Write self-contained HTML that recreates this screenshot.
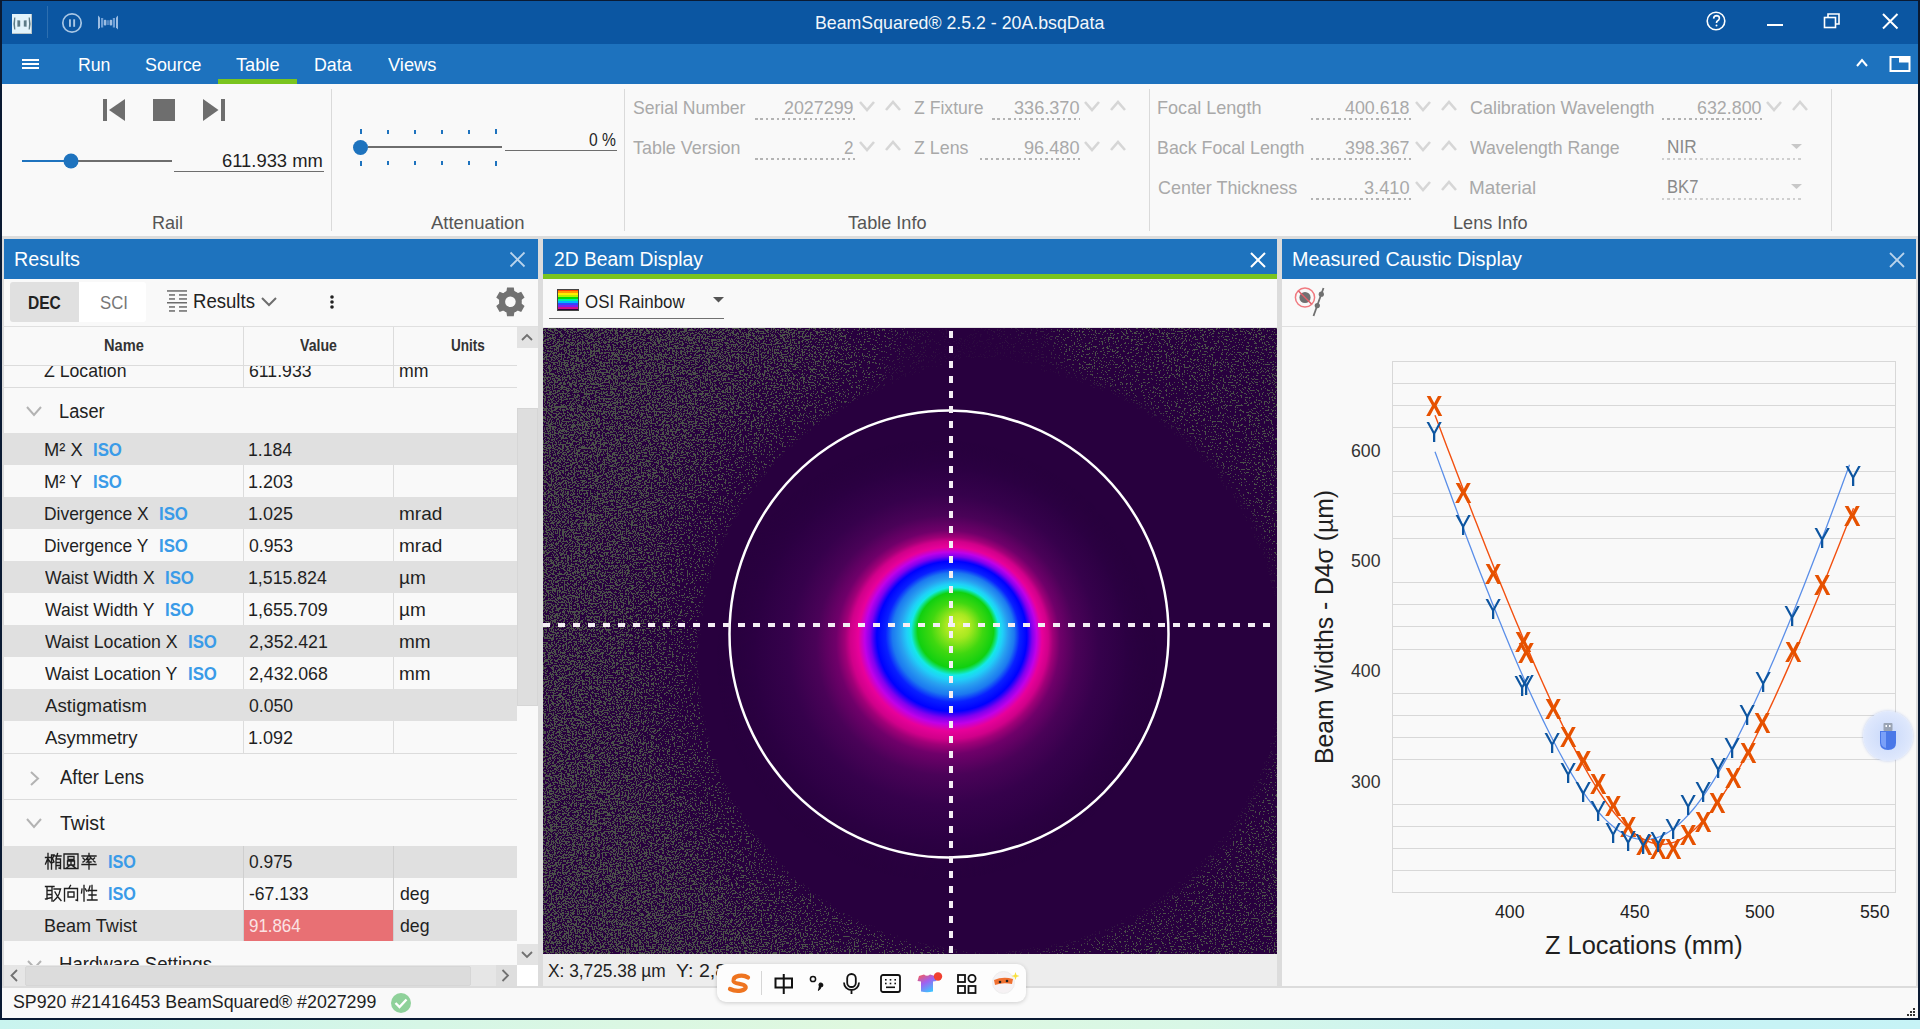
<!DOCTYPE html>
<html><head><meta charset="utf-8"><style>
html,body{margin:0;padding:0;width:1920px;height:1029px;overflow:hidden;background:#cdf4f0;font-family:"Liberation Sans",sans-serif;}
.t{position:absolute;white-space:pre;transform-origin:0 0;}
div{box-sizing:border-box;}
svg{position:absolute;overflow:visible;}
</style></head><body>
<div style="position:absolute;left:0px;top:0px;width:1920px;height:1020px;background:#0a1a33;"></div>
<div style="position:absolute;left:0px;top:1020px;width:1920px;height:9px;background:linear-gradient(90deg,#c9f4ef 0%,#d6f6e6 22%,#dff8df 45%,#d8f7e6 62%,#c9f3f3 78%,#c6f3f6 100%);"></div>
<div style="position:absolute;left:2px;top:1px;width:1916px;height:43px;background:#0b56a2;"></div>
<div style="position:absolute;left:2px;top:44px;width:1916px;height:40px;background:#1d72be;"></div>
<div style="position:absolute;left:2px;top:84px;width:1916px;height:152px;background:#f9f9f9;"></div>
<div style="position:absolute;left:2px;top:236px;width:1916px;height:752px;background:#dcdcdc;"></div>
<div style="position:absolute;left:2px;top:988px;width:1916px;height:30px;background:#f9f9f9;"></div>
<div style="position:absolute;left:218px;top:79px;width:79px;height:5px;background:#7ac41e;"></div>
<div style="position:absolute;left:331px;top:89px;width:1px;height:142px;background:#dadada;"></div>
<div style="position:absolute;left:624px;top:89px;width:1px;height:142px;background:#dadada;"></div>
<div style="position:absolute;left:1149px;top:89px;width:1px;height:142px;background:#dadada;"></div>
<div style="position:absolute;left:1831px;top:89px;width:1px;height:142px;background:#dadada;"></div>
<div style="position:absolute;left:4px;top:239px;width:534px;height:40px;background:#1e73be;"></div>
<div style="position:absolute;left:4px;top:279px;width:534px;height:48px;background:#f9f9f9;"></div>
<div style="position:absolute;left:4px;top:327px;width:534px;height:661px;background:#f9f9f9;"></div>
<div style="position:absolute;left:543px;top:239px;width:734px;height:35px;background:#1e73be;"></div>
<div style="position:absolute;left:543px;top:274px;width:734px;height:5px;background:#7ac41e;"></div>
<div style="position:absolute;left:543px;top:279px;width:734px;height:48px;background:#f9f9f9;"></div>
<div style="position:absolute;left:543px;top:328px;width:734px;height:626px;background:#28003e;"></div>
<div style="position:absolute;left:543px;top:954px;width:734px;height:32px;background:#ededed;"></div>
<div style="position:absolute;left:1282px;top:239px;width:634px;height:40px;background:#1e73be;"></div>
<div style="position:absolute;left:1282px;top:279px;width:634px;height:707px;background:#f9f9f9;"></div>
<div style="position:absolute;left:12px;top:14px;width:20px;height:20px;background:#e2f3fb;border-right:1px solid #b8c4c8;border-bottom:1px solid #b8c4c8"></div>
<svg style="left:12px;top:14px;" width="20" height="20" viewBox="0 0 20 20"><g fill="#5d7b86"><path d="M2.2,3.4 Q0.6,9.5 2.2,15.6 L3.4,15.6 Q2.6,9.5 3.4,3.4 Z"/><path d="M17.8,3.4 Q19.4,9.5 17.8,15.6 L16.6,15.6 Q17.4,9.5 16.6,3.4 Z"/><path d="M5.4,6.2 L8.2,6.6 L8.2,12.4 L5.4,12.8 Z"/><path d="M14.6,6.2 L11.8,6.6 L11.8,12.4 L14.6,12.8 Z"/></g></svg>
<div style="position:absolute;left:47px;top:6px;width:1px;height:32px;background:#2d6fb0;"></div>
<svg style="left:61px;top:12px;" width="22" height="22" viewBox="0 0 22 22"><circle cx="11" cy="11" r="9.2" fill="none" stroke="#a8c6e4" stroke-width="1.7"/><rect x="8" y="7.3" width="1.9" height="7.5" fill="#a8c6e4"/><rect x="12.2" y="7.3" width="1.9" height="7.5" fill="#a8c6e4"/></svg>
<svg style="left:97px;top:15px;" width="22" height="16" viewBox="0 0 22 16"><g fill="#9dbde2"><path d="M1,0.5 L3,2.5 V12.5 L1,14.5 Z"/><path d="M21,0.5 L19,2.5 V12.5 L21,14.5 Z"/><rect x="4" y="3" width="2.2" height="9.5" fill="#6f9fd6"/><rect x="15.8" y="3" width="2.2" height="9.5" fill="#6f9fd6"/><rect x="6.8" y="4.8" width="2.6" height="5.6" rx="1"/><rect x="12.6" y="4.8" width="2.6" height="5.6" rx="1"/><rect x="10.3" y="5.2" width="1.4" height="4.8" fill="#6f9fd6"/></g></svg>
<svg style="left:1705px;top:10px;" width="23" height="23" viewBox="0 0 23 23"><circle cx="11" cy="11" r="8.8" fill="none" stroke="#ffffff" stroke-width="1.6"/><path d="M8.6,8.6 Q8.8,5.6 11.6,5.6 Q14.5,5.8 14.4,8.3 Q14.3,10 12.4,11 Q11.5,11.6 11.5,13" fill="none" stroke="#fff" stroke-width="1.6"/><circle cx="11.5" cy="15.6" r="1" fill="#fff"/></svg>
<div style="position:absolute;left:1767px;top:24px;width:16px;height:2px;background:#ffffff;"></div>
<svg style="left:1823px;top:12px;" width="20" height="18" viewBox="0 0 20 18"><rect x="1.5" y="5.5" width="11" height="10" fill="none" stroke="#fff" stroke-width="1.6"/><path d="M5,5.5 V2 H16 V12 H12.5" fill="none" stroke="#fff" stroke-width="1.6"/></svg>
<svg style="left:1882px;top:13px;" width="17" height="17" viewBox="0 0 17 17"><path d="M1,1 L15.5,15.5 M15.5,1 L1,15.5" stroke="#fff" stroke-width="2"/></svg>
<div style="position:absolute;left:22px;top:59px;width:17px;height:2px;background:#ffffff;"></div>
<div style="position:absolute;left:22px;top:63px;width:17px;height:2px;background:#ffffff;"></div>
<div style="position:absolute;left:22px;top:67px;width:17px;height:2px;background:#ffffff;"></div>
<svg style="left:1855px;top:58px;" width="14" height="10" viewBox="0 0 14 10"><polyline points="2,8 7.0,2 12,8" fill="none" stroke="#ffffff" stroke-width="2"/></svg>
<svg style="left:1889px;top:55px;" width="23" height="18" viewBox="0 0 23 18"><rect x="1.5" y="2" width="19" height="14" fill="none" stroke="#fff" stroke-width="2"/><rect x="10" y="2" width="10.5" height="5.5" fill="#fff"/></svg>
<div style="position:absolute;left:103px;top:99px;width:4px;height:22px;background:#6e6e6e;"></div>
<svg style="left:109px;top:99px;" width="17" height="22" viewBox="0 0 17 22"><polygon points="0,11 16,0 16,22" fill="#6e6e6e"/></svg>
<div style="position:absolute;left:153px;top:99px;width:22px;height:22px;background:#6e6e6e;"></div>
<svg style="left:203px;top:99px;" width="16" height="22" viewBox="0 0 16 22"><polygon points="0,0 15.5,11 0,22" fill="#6e6e6e"/></svg>
<div style="position:absolute;left:221px;top:99px;width:4px;height:22px;background:#6e6e6e;"></div>
<div style="position:absolute;left:22px;top:160px;width:50px;height:2px;background:#1e73be;"></div>
<div style="position:absolute;left:72px;top:160px;width:100px;height:2px;background:#6e6e6e;"></div>
<svg style="left:63px;top:153px;" width="16" height="16" viewBox="0 0 16 16"><circle cx="8" cy="8" r="7.5" fill="#1e73be"/></svg>
<div style="position:absolute;left:174px;top:171px;width:150px;height:1px;background:#6e6e6e;"></div>
<div style="position:absolute;left:368px;top:146px;width:134px;height:2px;background:#6e6e6e;"></div>
<svg style="left:352px;top:139px;" width="17" height="17" viewBox="0 0 17 17"><circle cx="8.5" cy="8.5" r="7.5" fill="#1e73be"/></svg>
<div style="position:absolute;left:360px;top:129px;width:2px;height:5px;background:#1e73be;"></div>
<div style="position:absolute;left:360px;top:161px;width:2px;height:5px;background:#1e73be;"></div>
<div style="position:absolute;left:387px;top:130px;width:2px;height:4px;background:#1e73be;"></div>
<div style="position:absolute;left:387px;top:161px;width:2px;height:4px;background:#1e73be;"></div>
<div style="position:absolute;left:414px;top:130px;width:2px;height:4px;background:#1e73be;"></div>
<div style="position:absolute;left:414px;top:161px;width:2px;height:4px;background:#1e73be;"></div>
<div style="position:absolute;left:441px;top:130px;width:2px;height:4px;background:#1e73be;"></div>
<div style="position:absolute;left:441px;top:161px;width:2px;height:4px;background:#1e73be;"></div>
<div style="position:absolute;left:468px;top:130px;width:2px;height:4px;background:#1e73be;"></div>
<div style="position:absolute;left:468px;top:161px;width:2px;height:4px;background:#1e73be;"></div>
<div style="position:absolute;left:495px;top:129px;width:2px;height:5px;background:#1e73be;"></div>
<div style="position:absolute;left:495px;top:161px;width:2px;height:5px;background:#1e73be;"></div>
<div style="position:absolute;left:505px;top:150px;width:112px;height:1px;background:#6e6e6e;"></div>
<div style="position:absolute;left:755px;top:118px;width:100px;height:2px;background:repeating-linear-gradient(90deg,#b4b4b4 0 2.5px,transparent 2.5px 5.45px);"></div>
<div style="position:absolute;left:755px;top:158px;width:100px;height:2px;background:repeating-linear-gradient(90deg,#b4b4b4 0 2.5px,transparent 2.5px 5.45px);"></div>
<svg style="left:858px;top:100px;" width="18" height="12" viewBox="0 0 18 12"><polyline points="2,2 9.0,10 16,2" fill="none" stroke="#d6d6d6" stroke-width="2.6"/></svg>
<svg style="left:884px;top:100px;" width="18" height="12" viewBox="0 0 18 12"><polyline points="2,10 9.0,2 16,10" fill="none" stroke="#d6d6d6" stroke-width="2.6"/></svg>
<svg style="left:858px;top:140px;" width="18" height="12" viewBox="0 0 18 12"><polyline points="2,2 9.0,10 16,2" fill="none" stroke="#d6d6d6" stroke-width="2.6"/></svg>
<svg style="left:884px;top:140px;" width="18" height="12" viewBox="0 0 18 12"><polyline points="2,10 9.0,2 16,10" fill="none" stroke="#d6d6d6" stroke-width="2.6"/></svg>
<div style="position:absolute;left:992px;top:118px;width:88px;height:2px;background:repeating-linear-gradient(90deg,#b4b4b4 0 2.5px,transparent 2.5px 5.45px);"></div>
<div style="position:absolute;left:980px;top:158px;width:100px;height:2px;background:repeating-linear-gradient(90deg,#b4b4b4 0 2.5px,transparent 2.5px 5.45px);"></div>
<svg style="left:1083px;top:100px;" width="18" height="12" viewBox="0 0 18 12"><polyline points="2,2 9.0,10 16,2" fill="none" stroke="#d6d6d6" stroke-width="2.6"/></svg>
<svg style="left:1109px;top:100px;" width="18" height="12" viewBox="0 0 18 12"><polyline points="2,10 9.0,2 16,10" fill="none" stroke="#d6d6d6" stroke-width="2.6"/></svg>
<svg style="left:1083px;top:140px;" width="18" height="12" viewBox="0 0 18 12"><polyline points="2,2 9.0,10 16,2" fill="none" stroke="#d6d6d6" stroke-width="2.6"/></svg>
<svg style="left:1109px;top:140px;" width="18" height="12" viewBox="0 0 18 12"><polyline points="2,10 9.0,2 16,10" fill="none" stroke="#d6d6d6" stroke-width="2.6"/></svg>
<div style="position:absolute;left:1311px;top:118px;width:100px;height:2px;background:repeating-linear-gradient(90deg,#b4b4b4 0 2.5px,transparent 2.5px 5.45px);"></div>
<svg style="left:1414px;top:100px;" width="18" height="12" viewBox="0 0 18 12"><polyline points="2,2 9.0,10 16,2" fill="none" stroke="#d6d6d6" stroke-width="2.6"/></svg>
<svg style="left:1440px;top:100px;" width="18" height="12" viewBox="0 0 18 12"><polyline points="2,10 9.0,2 16,10" fill="none" stroke="#d6d6d6" stroke-width="2.6"/></svg>
<div style="position:absolute;left:1311px;top:158px;width:100px;height:2px;background:repeating-linear-gradient(90deg,#b4b4b4 0 2.5px,transparent 2.5px 5.45px);"></div>
<svg style="left:1414px;top:140px;" width="18" height="12" viewBox="0 0 18 12"><polyline points="2,2 9.0,10 16,2" fill="none" stroke="#d6d6d6" stroke-width="2.6"/></svg>
<svg style="left:1440px;top:140px;" width="18" height="12" viewBox="0 0 18 12"><polyline points="2,10 9.0,2 16,10" fill="none" stroke="#d6d6d6" stroke-width="2.6"/></svg>
<div style="position:absolute;left:1311px;top:198px;width:100px;height:2px;background:repeating-linear-gradient(90deg,#b4b4b4 0 2.5px,transparent 2.5px 5.45px);"></div>
<svg style="left:1414px;top:180px;" width="18" height="12" viewBox="0 0 18 12"><polyline points="2,2 9.0,10 16,2" fill="none" stroke="#d6d6d6" stroke-width="2.6"/></svg>
<svg style="left:1440px;top:180px;" width="18" height="12" viewBox="0 0 18 12"><polyline points="2,10 9.0,2 16,10" fill="none" stroke="#d6d6d6" stroke-width="2.6"/></svg>
<div style="position:absolute;left:1662px;top:118px;width:100px;height:2px;background:repeating-linear-gradient(90deg,#b4b4b4 0 2.5px,transparent 2.5px 5.45px);"></div>
<svg style="left:1765px;top:100px;" width="18" height="12" viewBox="0 0 18 12"><polyline points="2,2 9.0,10 16,2" fill="none" stroke="#d6d6d6" stroke-width="2.6"/></svg>
<svg style="left:1791px;top:100px;" width="18" height="12" viewBox="0 0 18 12"><polyline points="2,10 9.0,2 16,10" fill="none" stroke="#d6d6d6" stroke-width="2.6"/></svg>
<div style="position:absolute;left:1662px;top:158px;width:140px;height:2px;background:repeating-linear-gradient(90deg,#cfcfcf 0 2.5px,transparent 2.5px 5.45px);"></div>
<div style="position:absolute;left:1662px;top:198px;width:140px;height:2px;background:repeating-linear-gradient(90deg,#cfcfcf 0 2.5px,transparent 2.5px 5.45px);"></div>
<svg style="left:1791px;top:144px;" width="12" height="6" viewBox="0 0 12 6"><polygon points="0,0 11,0 5.5,5" fill="#c8c8c8"/></svg>
<svg style="left:1791px;top:184px;" width="12" height="6" viewBox="0 0 12 6"><polygon points="0,0 11,0 5.5,5" fill="#c8c8c8"/></svg>
<svg style="left:509px;top:251px;" width="17" height="17" viewBox="0 0 17 17"><path d="M1.5,1.5 L15.5,15.5 M15.5,1.5 L1.5,15.5" stroke="#b9d3ec" stroke-width="1.8"/></svg>
<div style="position:absolute;left:10px;top:282px;width:69px;height:40px;background:#e0e0e0;border-radius:3px 0 0 3px"></div>
<div style="position:absolute;left:79px;top:282px;width:67px;height:40px;background:#ffffff;border-radius:0 3px 3px 0"></div>
<svg style="left:167px;top:290px;" width="21" height="22" viewBox="0 0 21 22"><rect x="0" y="0.2" width="20" height="1.5" fill="#6b6b6b"/><rect x="2" y="4.2" width="6" height="1.5" fill="#6b6b6b"/><rect x="12" y="4.2" width="8" height="1.5" fill="#6b6b6b"/><rect x="2" y="8.2" width="6" height="1.5" fill="#6b6b6b"/><rect x="12" y="8.2" width="8" height="1.5" fill="#6b6b6b"/><rect x="0" y="12" width="20" height="1.5" fill="#6b6b6b"/><rect x="2" y="16.2" width="6" height="1.5" fill="#6b6b6b"/><rect x="12" y="16.2" width="8" height="1.5" fill="#6b6b6b"/><rect x="2" y="20.2" width="6" height="1.5" fill="#6b6b6b"/><rect x="12" y="20.2" width="8" height="1.5" fill="#6b6b6b"/></svg>
<svg style="left:260px;top:296px;" width="18" height="11" viewBox="0 0 18 11"><polyline points="2,2 9.0,9 16,2" fill="none" stroke="#6e6e6e" stroke-width="2"/></svg>
<svg style="left:329px;top:294px;" width="6" height="6" viewBox="0 0 6 6"><circle cx="3" cy="3" r="1.8" fill="#222"/></svg>
<svg style="left:329px;top:299.2px;" width="6" height="6" viewBox="0 0 6 6"><circle cx="3" cy="3" r="1.8" fill="#222"/></svg>
<svg style="left:329px;top:304.4px;" width="6" height="6" viewBox="0 0 6 6"><circle cx="3" cy="3" r="1.8" fill="#222"/></svg>
<svg style="left:494px;top:286px;" width="32" height="32" viewBox="0 0 32 32"><polygon points="12.45,5.32 13.03,1.39 19.77,1.39 20.35,5.32 23.50,7.14 27.19,5.67 30.57,11.52 27.45,13.98 27.45,17.62 30.57,20.08 27.19,25.93 23.50,24.46 20.35,26.28 19.77,30.21 13.03,30.21 12.45,26.28 9.30,24.46 5.61,25.93 2.23,20.08 5.35,17.62 5.35,13.98 2.23,11.52 5.61,5.67 9.30,7.14" fill="#727272"/><circle cx="16.4" cy="15.8" r="11.2" fill="#727272"/><circle cx="16.4" cy="15.8" r="5.3" fill="#f9f9f9"/></svg>
<div style="position:absolute;left:4px;top:326px;width:534px;height:1px;background:#e0e0e0;"></div>
<div style="position:absolute;left:243px;top:327px;width:1px;height:60px;background:#dcdcdc;"></div>
<div style="position:absolute;left:243px;top:433px;width:1px;height:320px;background:#dcdcdc;"></div>
<div style="position:absolute;left:393px;top:327px;width:1px;height:60px;background:#dcdcdc;"></div>
<div style="position:absolute;left:393px;top:433px;width:1px;height:320px;background:#dcdcdc;"></div>
<div style="position:absolute;left:4px;top:365px;width:513px;height:1px;background:#dcdcdc;"></div>
<div style="position:absolute;left:4px;top:387px;width:513px;height:1px;background:#dcdcdc;"></div>
<div style="position:absolute;left:4px;top:366px;width:513px;height:21px;overflow:hidden"><div class="t" style="left:40px;top:-6px;font-size:19px;line-height:21px;color:#1f1f1f;transform:scaleX(0.93)">Z Location</div><div class="t" style="left:245px;top:-6px;font-size:19px;line-height:21px;color:#1f1f1f;transform:scaleX(0.93)">611.933</div><div class="t" style="left:395px;top:-6px;font-size:19px;line-height:21px;color:#1f1f1f;transform:scaleX(0.93)">mm</div></div>
<svg style="left:25px;top:405px;" width="18" height="12" viewBox="0 0 18 12"><polyline points="2,2 9.0,10 16,2" fill="none" stroke="#b3b3b3" stroke-width="2"/></svg>
<div style="position:absolute;left:4px;top:433px;width:513px;height:32px;background:#e0e0e0;"></div>
<div style="position:absolute;left:4px;top:497px;width:513px;height:32px;background:#e0e0e0;"></div>
<div style="position:absolute;left:4px;top:561px;width:513px;height:32px;background:#e0e0e0;"></div>
<div style="position:absolute;left:4px;top:625px;width:513px;height:32px;background:#e0e0e0;"></div>
<div style="position:absolute;left:4px;top:689px;width:513px;height:32px;background:#e0e0e0;"></div>
<div style="position:absolute;left:4px;top:753px;width:513px;height:1px;background:#dcdcdc;"></div>
<svg style="left:30px;top:771px;" width="10" height="16" viewBox="0 0 10 16"><polyline points="1,1 8,7.5 1,14" fill="none" stroke="#b3b3b3" stroke-width="2"/></svg>
<div style="position:absolute;left:4px;top:799px;width:513px;height:1px;background:#dcdcdc;"></div>
<svg style="left:25px;top:817px;" width="18" height="12" viewBox="0 0 18 12"><polyline points="2,2 9.0,10 16,2" fill="none" stroke="#b3b3b3" stroke-width="2"/></svg>
<div style="position:absolute;left:4px;top:846px;width:513px;height:32px;background:#e0e0e0;"></div>
<div style="position:absolute;left:4px;top:910px;width:513px;height:31px;background:#e0e0e0;"></div>
<div style="position:absolute;left:244px;top:910px;width:149px;height:31px;background:#e87074;"></div>
<div style="position:absolute;left:243px;top:846px;width:1px;height:95px;background:#cfcfcf;"></div>
<div style="position:absolute;left:393px;top:846px;width:1px;height:95px;background:#cfcfcf;"></div>
<svg style="left:45px;top:853px;" width="17" height="17" viewBox="0 0 17 17"><path d="M0.5,4.5 H5.5 M3,0.5 V16 M3,5 L0.5,11 M3,6 L5.5,9.5 M6.5,2 V16 M6.5,2 H9 L7.5,5.5 L9,9 L6.5,10 M10,3 H16 M12.5,0.5 L11,6 M11,6 V16 M11,6 H15.5 V15.5 L14,15 M11,9.5 H15.5 M11,12.5 H15.5" fill="none" stroke="#1f1f1f" stroke-width="1.35" stroke-linecap="square"/></svg>
<svg style="left:63px;top:853px;" width="17" height="17" viewBox="0 0 17 17"><path d="M1,1 H15 V15.5 H1 Z M5,3.5 H11 V6.5 H5 Z M4.5,8 H11.5 V12 H4.5 Z M8,9.5 V12 M7.5,12 L4,14.5 M8.5,12 L12,14.5" fill="none" stroke="#1f1f1f" stroke-width="1.35" stroke-linecap="square"/></svg>
<svg style="left:81px;top:853px;" width="17" height="17" viewBox="0 0 17 17"><path d="M8,0.5 V2.5 M1,3 H15 M7,4 L5,6.5 L9,6 L6,9 H10 M9,4 L11,6 M2,5 L3.5,6.5 M13.5,5 L12,6.5 M2,9 L3.5,8 M14,9 L12.5,8 M1,11.5 H15 M8,9 V16" fill="none" stroke="#1f1f1f" stroke-width="1.35" stroke-linecap="square"/></svg>
<svg style="left:45px;top:885px;" width="17" height="17" viewBox="0 0 17 17"><path d="M0.5,1.5 H9 M2,1.5 V14 M7,1.5 V16 M2,5.5 H7 M2,9.5 H7 M0.5,14 L7,12.5 M9,4 H15.5 L14,9 L11.5,13 L8.5,16 M10,7 L13,12 L16,15.5" fill="none" stroke="#1f1f1f" stroke-width="1.35" stroke-linecap="square"/></svg>
<svg style="left:63px;top:885px;" width="17" height="17" viewBox="0 0 17 17"><path d="M7.5,0.5 L6,3 M1.5,3.5 V16 M1.5,3.5 H14.5 V15.5 L13,15 M5,7 H11 V12 H5 Z" fill="none" stroke="#1f1f1f" stroke-width="1.35" stroke-linecap="square"/></svg>
<svg style="left:81px;top:885px;" width="17" height="17" viewBox="0 0 17 17"><path d="M3,0.5 V16 M1,4 L0.5,8 M4.5,4 L5.5,6 M9,1 L7.5,6 M7,5.5 H15.5 M11,0.5 V15 M8,10 H15 M6.5,15 H16" fill="none" stroke="#1f1f1f" stroke-width="1.35" stroke-linecap="square"/></svg>
<div style="position:absolute;left:4px;top:941px;width:513px;height:24px;overflow:hidden"><svg style="left:23px;top:19px" width="16" height="10"><polyline points="1,1 7.5,8 14,1" fill="none" stroke="#b3b3b3" stroke-width="2"/></svg><div class="t" style="left:55px;top:12px;font-size:20px;line-height:23px;color:#222;transform:scaleX(0.93)">Hardware Settings</div></div>
<div style="position:absolute;left:517px;top:327px;width:21px;height:638px;background:#f9f9f9;"></div>
<div style="position:absolute;left:517px;top:327px;width:21px;height:21px;background:#e3e3e3;"></div>
<svg style="left:520px;top:333px;" width="14" height="9" viewBox="0 0 14 9"><polyline points="2,7 7.0,2 12,7" fill="none" stroke="#707070" stroke-width="1.8"/></svg>
<div style="position:absolute;left:517px;top:408px;width:21px;height:298px;background:#dedede;border:1px solid #d6d6d6"></div>
<div style="position:absolute;left:517px;top:944px;width:21px;height:21px;background:#e3e3e3;"></div>
<svg style="left:520px;top:950px;" width="14" height="9" viewBox="0 0 14 9"><polyline points="2,2 7.0,7 12,2" fill="none" stroke="#707070" stroke-width="1.8"/></svg>
<div style="position:absolute;left:4px;top:965px;width:513px;height:23px;background:#e6e6e6;"></div>
<div style="position:absolute;left:25px;top:966px;width:446px;height:20px;background:#dcdcdc;border:1px solid #d6d6d6;border-radius:2px"></div>
<svg style="left:10px;top:969px;" width="9" height="13" viewBox="0 0 9 13"><polyline points="7,1 1.5,6.5 7,12" fill="none" stroke="#707070" stroke-width="1.8"/></svg>
<div style="position:absolute;left:496px;top:965px;width:21px;height:21px;background:#dedede;"></div>
<svg style="left:501px;top:969px;" width="9" height="13" viewBox="0 0 9 13"><polyline points="1.5,1 7,6.5 1.5,12" fill="none" stroke="#707070" stroke-width="1.8"/></svg>
<div style="position:absolute;left:517px;top:965px;width:21px;height:21px;background:#ffffff;"></div>
<div style="position:absolute;left:4px;top:986px;width:534px;height:2px;background:#dcdcdc;"></div>
<svg style="left:390px;top:992px;" width="22" height="22" viewBox="0 0 22 22"><circle cx="11" cy="11" r="10" fill="#8fd19a"/><polyline points="5.5,11 9.5,15 16.5,7.5" fill="none" stroke="#fff" stroke-width="2.4"/></svg>
<svg style="left:1250px;top:252px;" width="16" height="16" viewBox="0 0 16 16"><path d="M1,1 L15,15 M15,1 L1,15" stroke="#ffffff" stroke-width="2"/></svg>
<svg style="left:557px;top:289px;" width="22" height="22" viewBox="0 0 22 22"><rect x="0" y="0" width="22" height="2" fill="#ff4000"/><rect x="0" y="2" width="22" height="2" fill="#ff9900"/><rect x="0" y="4" width="22" height="2" fill="#ffee00"/><rect x="0" y="6" width="22" height="2" fill="#b8f000"/><rect x="0" y="8" width="22" height="2" fill="#00dd00"/><rect x="0" y="10" width="22" height="2" fill="#00f0a0"/><rect x="0" y="12" width="22" height="2" fill="#00b4ff"/><rect x="0" y="14" width="22" height="2" fill="#3344ff"/><rect x="0" y="16" width="22" height="2" fill="#7a20f0"/><rect x="0" y="18" width="22" height="2" fill="#d0108a"/><rect x="0" y="20" width="22" height="2" fill="#300040"/><rect x="0.5" y="0.5" width="21" height="21" fill="none" stroke="#444" stroke-width="1"/></svg>
<svg style="left:713px;top:297px;" width="12" height="6" viewBox="0 0 12 6"><polygon points="0,0 11,0 5.5,5.5" fill="#555"/></svg>
<div style="position:absolute;left:549px;top:318px;width:175px;height:1px;background:#707070;"></div>
<div style="position:absolute;left:543px;top:327px;width:734px;height:1px;background:#e3e3e3;"></div>
<svg style="left:543px;top:328px" width="734" height="626" viewBox="0 0 734 626">
<defs>
 <filter id="speck" x="0" y="0" width="734" height="626" filterUnits="userSpaceOnUse" color-interpolation-filters="sRGB">
  <feTurbulence type="fractalNoise" baseFrequency="0.61" numOctaves="3" seed="11" result="noise"/>
  <feColorMatrix in="noise" type="matrix" values="0 0 0 0 0  0 0 0 0 0  0 0 0 0 0  3.2 0 0 0 -1.1" result="na"/>
  <feColorMatrix in="SourceGraphic" type="matrix" values="0 0 0 0 0  0 0 0 0 0  0 0 0 0 0  1 0 0 0 0" result="da"/>
  <feComposite in="na" in2="da" operator="arithmetic" k1="0" k2="30" k3="30" k4="-30" result="th"/>
  <feFlood flood-color="#4b5149" result="fl"/>
  <feComposite in="fl" in2="th" operator="in"/>
 </filter>
 <radialGradient id="dens" gradientUnits="userSpaceOnUse" cx="447" cy="332" r="528">
  <stop offset="0" stop-color="#000"/>
  <stop offset="0.55" stop-color="#000"/>
  <stop offset="0.615" stop-color="#363636"/>
  <stop offset="0.70" stop-color="#666"/>
  <stop offset="0.80" stop-color="#787878"/>
  <stop offset="1" stop-color="#808080"/>
 </radialGradient>
 <radialGradient id="densT">
  <stop offset="0" stop-color="#000" stop-opacity="1"/>
  <stop offset="0.6" stop-color="#000" stop-opacity="0.85"/>
  <stop offset="1" stop-color="#000" stop-opacity="0"/>
 </radialGradient>
 <linearGradient id="hmask" x1="0" y1="0" x2="1" y2="0">
  <stop offset="0" stop-color="#fff"/>
  <stop offset="0.45" stop-color="#fff"/>
  <stop offset="0.7" stop-color="#777"/>
  <stop offset="1" stop-color="#555"/>
 </linearGradient>
 <mask id="hm" maskUnits="userSpaceOnUse" x="0" y="0" width="734" height="626"><rect width="734" height="626" fill="url(#hmask)"/></mask>
 <radialGradient id="beam" gradientUnits="userSpaceOnUse" cx="394" cy="332" r="220" fx="416.5" fy="296">
  <stop offset="0.000" stop-color="#d0f030"/>
  <stop offset="0.055" stop-color="#a8e820"/>
  <stop offset="0.118" stop-color="#40d810"/>
  <stop offset="0.173" stop-color="#10d010"/>
  <stop offset="0.186" stop-color="#10e070"/>
  <stop offset="0.200" stop-color="#14e8e8"/>
  <stop offset="0.218" stop-color="#20d0f8"/>
  <stop offset="0.245" stop-color="#28a0f0"/>
  <stop offset="0.277" stop-color="#1c78f0"/>
  <stop offset="0.305" stop-color="#0820ff"/>
  <stop offset="0.341" stop-color="#0000ff"/>
  <stop offset="0.368" stop-color="#8000f0"/>
  <stop offset="0.391" stop-color="#c000e8"/>
  <stop offset="0.418" stop-color="#e8009a"/>
  <stop offset="0.450" stop-color="#d0008a"/>
  <stop offset="0.473" stop-color="#a00078"/>
  <stop offset="0.509" stop-color="#70006a"/>
  <stop offset="0.591" stop-color="#4a0258"/>
  <stop offset="0.705" stop-color="#36014c"/>
  <stop offset="0.841" stop-color="#2c0043"/>
  <stop offset="1.000" stop-color="#28003e" stop-opacity="0"/>
 </radialGradient>
</defs>
<rect width="734" height="626" fill="#28003e"/>
<g filter="url(#speck)">
 <rect width="734" height="626" fill="#000"/>
 <rect width="734" height="626" fill="url(#dens)" mask="url(#hm)"/>
 <ellipse cx="417" cy="0" rx="150" ry="110" fill="url(#densT)"/>
</g>
<rect width="734" height="626" fill="url(#beam)"/>
<ellipse cx="406" cy="306" rx="219.5" ry="223.5" fill="none" stroke="#ffffff" stroke-width="2.5"/>
<line x1="408" y1="0" x2="408" y2="626" stroke="#f4eef4" stroke-width="4" stroke-dasharray="7 8" stroke-dashoffset="-3"/>
<line x1="0" y1="297" x2="734" y2="297" stroke="#f4eef4" stroke-width="4" stroke-dasharray="7 8" stroke-dashoffset="0"/>
</svg>
<div style="position:absolute;left:543px;top:986px;width:734px;height:2px;background:#dcdcdc;"></div>
<div style="position:absolute;left:717px;top:964px;width:309px;height:38px;background:#fdfdfd;border-radius:9px;box-shadow:0 1px 4px rgba(0,0,0,0.18);z-index:20"></div>
<div style="position:absolute;left:717px;top:964px;width:309px;height:38px;z-index:21"><svg style="left:10px;top:9px" width="26" height="22"><path d="M21,4.5 C16,1 6,2.5 6.5,8 C7,11.5 17,10 18.5,13.5 C20,17.5 10,19.5 3,16" fill="none" stroke="#ee7420" stroke-width="4.2" stroke-linecap="round"/></svg><div style="position:absolute;left:44px;top:7px;width:1px;height:24px;background:#d6d6d6"></div><svg style="left:57px;top:10px" width="20" height="20"><path d="M1.5,4.5 H18 V13.5 H1.5 Z M9.75,0 V20" fill="none" stroke="#111" stroke-width="2"/></svg><svg style="left:92px;top:11px" width="14" height="16"><circle cx="4" cy="4" r="2.6" fill="none" stroke="#111" stroke-width="1.5"/><path d="M10,10.5 A1.9,1.9 0 1 1 11.8,12 Q11.5,14.5 9,15.5" fill="#111" stroke="#111" stroke-width="1.2"/></svg><svg style="left:125px;top:9px" width="19" height="22"><rect x="5.2" y="1" width="8.6" height="13" rx="4.3" fill="none" stroke="#111" stroke-width="1.8"/><path d="M2,9.5 A7.5,7.5 0 0 0 17,9.5 M9.5,17 V21" fill="none" stroke="#111" stroke-width="1.8"/></svg><svg style="left:163px;top:10px" width="21" height="20"><rect x="1" y="1" width="19" height="17" rx="2" fill="none" stroke="#111" stroke-width="1.8"/><g fill="#111"><rect x="5" y="5" width="1.6" height="1.6"/><rect x="9.7" y="5" width="1.6" height="1.6"/><rect x="14.4" y="5" width="1.6" height="1.6"/><rect x="5" y="8.7" width="1.6" height="1.6"/><rect x="9.7" y="8.7" width="1.6" height="1.6"/><rect x="14.4" y="8.7" width="1.6" height="1.6"/><rect x="6" y="12.5" width="9" height="1.6"/></g></svg><svg style="left:200px;top:6px" width="26" height="24"><defs><linearGradient id="sh" x1="0" y1="0" x2="0.6" y2="1"><stop offset="0" stop-color="#ff5a4a"/><stop offset="0.5" stop-color="#a060f0"/><stop offset="1" stop-color="#40c0ff"/></linearGradient></defs><path d="M2,6 L7,4.5 Q10,7 13,4.5 L18,6 L19.5,11 L16,11.5 L16,21.5 Q10,23 4,21.5 L4,11.5 L0.5,11 Z" fill="url(#sh)"/><circle cx="21" cy="6.5" r="4.2" fill="#f04030"/></svg><svg style="left:240px;top:10px" width="20" height="20"><g fill="none" stroke="#111" stroke-width="1.8"><rect x="1" y="1" width="7" height="7"/><circle cx="15" cy="4.5" r="3.6"/><rect x="1" y="12" width="7" height="7"/><rect x="11.5" y="12" width="7" height="7"/></g></svg><svg style="left:274px;top:6px" width="30" height="26"><circle cx="12.5" cy="12.5" r="11" fill="#f6f2f4" stroke="#eee" stroke-width="1"/><path d="M3,10 Q12,6 22,9 L21,14 Q12,12 4,15 Z" fill="#f07030"/><circle cx="9" cy="12" r="1.3" fill="#222"/><circle cx="16" cy="11" r="1.3" fill="#222"/><path d="M24.5,2 L25.5,5 L28.5,6 L25.5,7 L24.5,10 L23.5,7 L20.5,6 L23.5,5 Z" fill="#f8e040"/></svg></div>
<svg style="left:1889px;top:252px;" width="16" height="16" viewBox="0 0 16 16"><path d="M1,1 L15,15 M15,1 L1,15" stroke="#b9d3ec" stroke-width="1.8"/></svg>
<svg style="left:1293px;top:285px;" width="34" height="34" viewBox="0 0 34 34"><circle cx="12" cy="12.5" r="9.6" fill="none" stroke="#f07a80" stroke-width="1.5"/><circle cx="12" cy="12.5" r="5.6" fill="#707070"/><line x1="5.5" y1="6" x2="18.5" y2="19" stroke="#e0606a" stroke-width="1.6"/><line x1="30.5" y1="3" x2="20.5" y2="31" stroke="#707070" stroke-width="1.8"/><circle cx="28.3" cy="9.2" r="2.6" fill="#707070"/><circle cx="24.3" cy="20.6" r="2.6" fill="#707070"/></svg>
<div style="position:absolute;left:1282px;top:326px;width:634px;height:1px;background:#e0e0e0;"></div>
<div style="position:absolute;left:1392px;top:870px;width:504px;height:1px;background:#d8d8d8;"></div>
<div style="position:absolute;left:1392px;top:848px;width:504px;height:1px;background:#d8d8d8;"></div>
<div style="position:absolute;left:1392px;top:826px;width:504px;height:1px;background:#d8d8d8;"></div>
<div style="position:absolute;left:1392px;top:804px;width:504px;height:1px;background:#d8d8d8;"></div>
<div style="position:absolute;left:1392px;top:759px;width:504px;height:1px;background:#d8d8d8;"></div>
<div style="position:absolute;left:1392px;top:737px;width:504px;height:1px;background:#d8d8d8;"></div>
<div style="position:absolute;left:1392px;top:715px;width:504px;height:1px;background:#d8d8d8;"></div>
<div style="position:absolute;left:1392px;top:693px;width:504px;height:1px;background:#d8d8d8;"></div>
<div style="position:absolute;left:1392px;top:649px;width:504px;height:1px;background:#d8d8d8;"></div>
<div style="position:absolute;left:1392px;top:626px;width:504px;height:1px;background:#d8d8d8;"></div>
<div style="position:absolute;left:1392px;top:604px;width:504px;height:1px;background:#d8d8d8;"></div>
<div style="position:absolute;left:1392px;top:582px;width:504px;height:1px;background:#d8d8d8;"></div>
<div style="position:absolute;left:1392px;top:538px;width:504px;height:1px;background:#d8d8d8;"></div>
<div style="position:absolute;left:1392px;top:516px;width:504px;height:1px;background:#d8d8d8;"></div>
<div style="position:absolute;left:1392px;top:493px;width:504px;height:1px;background:#d8d8d8;"></div>
<div style="position:absolute;left:1392px;top:471px;width:504px;height:1px;background:#d8d8d8;"></div>
<div style="position:absolute;left:1392px;top:427px;width:504px;height:1px;background:#d8d8d8;"></div>
<div style="position:absolute;left:1392px;top:405px;width:504px;height:1px;background:#d8d8d8;"></div>
<div style="position:absolute;left:1392px;top:383px;width:504px;height:1px;background:#d8d8d8;"></div>
<div style="position:absolute;left:1392px;top:361px;width:504px;height:532px;background:transparent;border:1px solid #d8d8d8"></div>
<div class="t" style="left:1311px;top:764px;font-size:26px;line-height:30px;color:#1f1f1f;transform-origin:0 0;transform:rotate(-90deg) translate(0,-2px) scaleX(0.951)">Beam Widths - D4σ (µm)</div>
<svg style="left:0;top:0;z-index:6" width="1920" height="1029"><polyline points="1435.0,451.7 1438.0,459.9 1441.0,468.1 1444.0,476.3 1447.0,484.5 1450.0,492.6 1453.0,500.7 1456.0,508.8 1459.0,516.8 1462.0,524.8 1465.0,532.8 1468.0,540.7 1471.0,548.5 1474.0,556.4 1477.0,564.2 1480.0,571.9 1483.0,579.6 1486.0,587.2 1489.0,594.8 1492.0,602.4 1495.0,609.8 1498.0,617.3 1501.0,624.6 1504.0,631.9 1507.0,639.2 1510.0,646.4 1513.0,653.5 1516.0,660.5 1519.0,667.5 1522.0,674.3 1525.0,681.1 1528.0,687.9 1531.0,694.5 1534.0,701.0 1537.0,707.5 1540.0,713.8 1543.0,720.1 1546.0,726.2 1549.0,732.3 1552.0,738.2 1555.0,744.0 1558.0,749.7 1561.0,755.2 1564.0,760.7 1567.0,766.0 1570.0,771.1 1573.0,776.1 1576.0,781.0 1579.0,785.7 1582.0,790.2 1585.0,794.6 1588.0,798.8 1591.0,802.8 1594.0,806.7 1597.0,810.3 1600.0,813.8 1603.0,817.1 1606.0,820.1 1609.0,823.0 1612.0,825.6 1615.0,828.0 1618.0,830.2 1621.0,832.2 1624.0,834.0 1627.0,835.5 1630.0,836.8 1633.0,837.9 1636.0,838.7 1639.0,839.2 1642.0,839.6 1645.0,839.7 1648.0,839.5 1651.0,839.1 1654.0,838.5 1657.0,837.6 1660.0,836.5 1663.0,835.2 1666.0,833.6 1669.0,831.8 1672.0,829.8 1675.0,827.5 1678.0,825.0 1681.0,822.3 1684.0,819.4 1687.0,816.3 1690.0,813.0 1693.0,809.5 1696.0,805.8 1699.0,801.9 1702.0,797.8 1705.0,793.6 1708.0,789.2 1711.0,784.6 1714.0,779.9 1717.0,775.0 1720.0,769.9 1723.0,764.7 1726.0,759.4 1729.0,754.0 1732.0,748.4 1735.0,742.7 1738.0,736.8 1741.0,730.9 1744.0,724.8 1747.0,718.6 1750.0,712.4 1753.0,706.0 1756.0,699.5 1759.0,693.0 1762.0,686.3 1765.0,679.6 1768.0,672.7 1771.0,665.8 1774.0,658.9 1777.0,651.8 1780.0,644.7 1783.0,637.5 1786.0,630.2 1789.0,622.9 1792.0,615.5 1795.0,608.1 1798.0,600.6 1801.0,593.1 1804.0,585.4 1807.0,577.8 1810.0,570.1 1813.0,562.3 1816.0,554.5 1819.0,546.7 1822.0,538.8 1825.0,530.9 1828.0,522.9 1831.0,514.9 1834.0,506.9 1837.0,498.8 1840.0,490.7 1843.0,482.6 1846.0,474.4 1849.5,464.8" fill="none" stroke="#5a8ee8" stroke-width="1.3"/><polyline points="1435.0,415.2 1438.0,423.1 1441.0,431.1 1444.0,439.0 1447.0,446.9 1450.0,454.7 1453.0,462.6 1456.0,470.4 1459.0,478.2 1462.0,486.0 1465.0,493.8 1468.0,501.5 1471.0,509.2 1474.0,516.9 1477.0,524.6 1480.0,532.2 1483.0,539.8 1486.0,547.4 1489.0,554.9 1492.0,562.4 1495.0,569.9 1498.0,577.4 1501.0,584.8 1504.0,592.1 1507.0,599.4 1510.0,606.7 1513.0,614.0 1516.0,621.2 1519.0,628.3 1522.0,635.4 1525.0,642.5 1528.0,649.4 1531.0,656.4 1534.0,663.3 1537.0,670.1 1540.0,676.8 1543.0,683.5 1546.0,690.1 1549.0,696.7 1552.0,703.2 1555.0,709.6 1558.0,715.9 1561.0,722.1 1564.0,728.2 1567.0,734.2 1570.0,740.2 1573.0,746.0 1576.0,751.7 1579.0,757.4 1582.0,762.8 1585.0,768.2 1588.0,773.5 1591.0,778.6 1594.0,783.5 1597.0,788.3 1600.0,793.0 1603.0,797.5 1606.0,801.8 1609.0,806.0 1612.0,810.0 1615.0,813.8 1618.0,817.4 1621.0,820.8 1624.0,824.0 1627.0,826.9 1630.0,829.7 1633.0,832.2 1636.0,834.6 1639.0,836.6 1642.0,838.5 1645.0,840.0 1648.0,841.4 1651.0,842.5 1654.0,843.3 1657.0,843.9 1660.0,844.2 1663.0,844.2 1666.0,844.0 1669.0,843.5 1672.0,842.8 1675.0,841.8 1678.0,840.6 1681.0,839.1 1684.0,837.4 1687.0,835.4 1690.0,833.2 1693.0,830.7 1696.0,828.0 1699.0,825.1 1702.0,822.0 1705.0,818.7 1708.0,815.1 1711.0,811.4 1714.0,807.5 1717.0,803.4 1720.0,799.2 1723.0,794.7 1726.0,790.1 1729.0,785.4 1732.0,780.5 1735.0,775.4 1738.0,770.2 1741.0,764.9 1744.0,759.4 1747.0,753.9 1750.0,748.2 1753.0,742.4 1756.0,736.5 1759.0,730.5 1762.0,724.4 1765.0,718.2 1768.0,712.0 1771.0,705.6 1774.0,699.2 1777.0,692.6 1780.0,686.0 1783.0,679.4 1786.0,672.6 1789.0,665.9 1792.0,659.0 1795.0,652.1 1798.0,645.1 1801.0,638.1 1804.0,631.0 1807.0,623.9 1810.0,616.7 1813.0,609.5 1816.0,602.2 1819.0,594.9 1822.0,587.5 1825.0,580.2 1828.0,572.7 1831.0,565.3 1834.0,557.8 1837.0,550.2 1840.0,542.7 1843.0,535.1 1846.0,527.5 1849.0,519.8 1852.0,512.1 1853.5,508.3" fill="none" stroke="#f25010" stroke-width="1.4"/></svg>
<div style="position:absolute;left:1863px;top:711px;width:50px;height:50px;border-radius:50%;background:radial-gradient(circle at 50% 50%,#c8d8fa 0,#dce6fc 60%,#eef3fd 100%);box-shadow:0 0 3px rgba(80,120,220,0.35);z-index:9"></div>
<svg style="left:1878px;top:722px;z-index:10" width="22" height="30" viewBox="0 0 22 30"><rect x="5.5" y="1" width="9" height="8" rx="1" fill="#9aa4b4"/><rect x="7.5" y="3" width="1.5" height="2" fill="#fff"/><rect x="11" y="3" width="1.5" height="2" fill="#fff"/><path d="M2,9 H18 V21 Q18,28 10,28 Q2,28 2,21 Z" fill="#4a78e8"/><path d="M3,10 H8 V26 Q3,25 3,20 Z" fill="#7aa0f8"/></svg>
<div style="position:absolute;left:1913px;top:1008px;width:2px;height:2px;background:#333333;"></div>
<div style="position:absolute;left:1910px;top:1011px;width:2px;height:2px;background:#333333;"></div>
<div style="position:absolute;left:1913px;top:1011px;width:2px;height:2px;background:#333333;"></div>
<div style="position:absolute;left:1907px;top:1014px;width:2px;height:2px;background:#333333;"></div>
<div style="position:absolute;left:1910px;top:1014px;width:2px;height:2px;background:#333333;"></div>
<div style="position:absolute;left:1913px;top:1014px;width:2px;height:2px;background:#333333;"></div>
<div class="t" style="left:815.04px;top:12.00px;font-size:18.5px;line-height:21px;color:#f2f6fb;transform:scaleX(0.9592);z-index:5">BeamSquared® 2.5.2 - 20A.bsqData</div>
<div class="t" style="left:78.07px;top:54.00px;font-size:19px;line-height:21px;color:#ffffff;transform:scaleX(0.9313);z-index:5">Run</div>
<div class="t" style="left:145.00px;top:54.00px;font-size:19px;line-height:21px;color:#ffffff;transform:scaleX(0.9391);z-index:5">Source</div>
<div class="t" style="left:236.00px;top:54.00px;font-size:19px;line-height:21px;color:#ffffff;transform:scaleX(0.9586);z-index:5">Table</div>
<div class="t" style="left:314.06px;top:54.00px;font-size:19px;line-height:21px;color:#ffffff;transform:scaleX(0.9351);z-index:5">Data</div>
<div class="t" style="left:388.00px;top:54.00px;font-size:19px;line-height:21px;color:#ffffff;transform:scaleX(0.9631);z-index:5">Views</div>
<div class="t" style="left:152.05px;top:212.00px;font-size:19px;line-height:21px;color:#555555;transform:scaleX(0.9505);z-index:5">Rail</div>
<div class="t" style="left:431.00px;top:212.00px;font-size:19px;line-height:21px;color:#555555;transform:scaleX(0.9732);z-index:5">Attenuation</div>
<div class="t" style="left:848.00px;top:212.00px;font-size:19px;line-height:21px;color:#555555;transform:scaleX(0.9533);z-index:5">Table Info</div>
<div class="t" style="left:1453.05px;top:212.00px;font-size:19px;line-height:21px;color:#555555;transform:scaleX(0.9530);z-index:5">Lens Info</div>
<div class="t" style="left:13.99px;top:248.00px;font-size:19.5px;line-height:22px;color:#ffffff;transform:scaleX(1.0113);z-index:5">Results</div>
<div class="t" style="left:554.00px;top:248.00px;font-size:19.5px;line-height:22px;color:#ffffff;transform:scaleX(0.9875);z-index:5">2D Beam Display</div>
<div class="t" style="left:1291.99px;top:248.00px;font-size:19.5px;line-height:22px;color:#ffffff;transform:scaleX(1.0144);z-index:5">Measured Caustic Display</div>
<div class="t" style="left:13.00px;top:991.00px;font-size:18.5px;line-height:21px;color:#1f1f1f;transform:scaleX(0.9616);z-index:5">SP920 #21416453 BeamSquared® #2027299</div>
<div class="t" style="left:222.00px;top:150.00px;font-size:19px;line-height:21px;color:#1f1f1f;transform:scaleX(0.9673);z-index:5">611.933 mm</div>
<div class="t" style="left:589.00px;top:129.00px;font-size:19px;line-height:21px;color:#1f1f1f;transform:scaleX(0.8220);z-index:5">0 %</div>
<div class="t" style="left:633.00px;top:97.00px;font-size:19px;line-height:21px;color:#a9a9a9;transform:scaleX(0.9254);z-index:5">Serial Number</div>
<div class="t" style="left:633.00px;top:137.00px;font-size:19px;line-height:21px;color:#a9a9a9;transform:scaleX(0.9427);z-index:5">Table Version</div>
<div class="t" style="left:784.00px;top:97.00px;font-size:19px;line-height:21px;color:#a9a9a9;transform:scaleX(0.9400);z-index:5">2027299</div>
<div class="t" style="left:844.00px;top:137.00px;font-size:19px;line-height:21px;color:#a9a9a9;transform:scaleX(0.9000);z-index:5">2</div>
<div class="t" style="left:914.00px;top:97.00px;font-size:19px;line-height:21px;color:#a9a9a9;transform:scaleX(0.9276);z-index:5">Z Fixture</div>
<div class="t" style="left:914.00px;top:137.00px;font-size:19px;line-height:21px;color:#a9a9a9;transform:scaleX(0.9377);z-index:5">Z Lens</div>
<div class="t" style="left:1014.00px;top:97.00px;font-size:19px;line-height:21px;color:#a9a9a9;transform:scaleX(0.9543);z-index:5">336.370</div>
<div class="t" style="left:1024.00px;top:137.00px;font-size:19px;line-height:21px;color:#a9a9a9;transform:scaleX(0.9558);z-index:5">96.480</div>
<div class="t" style="left:1157.05px;top:97.00px;font-size:19px;line-height:21px;color:#a9a9a9;transform:scaleX(0.9512);z-index:5">Focal Length</div>
<div class="t" style="left:1157.06px;top:137.00px;font-size:19px;line-height:21px;color:#a9a9a9;transform:scaleX(0.9371);z-index:5">Back Focal Length</div>
<div class="t" style="left:1158.00px;top:177.00px;font-size:19px;line-height:21px;color:#a9a9a9;transform:scaleX(0.9434);z-index:5">Center Thickness</div>
<div class="t" style="left:1345.00px;top:97.00px;font-size:19px;line-height:21px;color:#a9a9a9;transform:scaleX(0.9396);z-index:5">400.618</div>
<div class="t" style="left:1345.00px;top:137.00px;font-size:19px;line-height:21px;color:#a9a9a9;transform:scaleX(0.9396);z-index:5">398.367</div>
<div class="t" style="left:1364.00px;top:177.00px;font-size:19px;line-height:21px;color:#a9a9a9;transform:scaleX(0.9579);z-index:5">3.410</div>
<div class="t" style="left:1470.00px;top:97.00px;font-size:19px;line-height:21px;color:#a9a9a9;transform:scaleX(0.9428);z-index:5">Calibration Wavelength</div>
<div class="t" style="left:1470.00px;top:137.00px;font-size:19px;line-height:21px;color:#a9a9a9;transform:scaleX(0.9293);z-index:5">Wavelength Range</div>
<div class="t" style="left:1469.01px;top:177.00px;font-size:19px;line-height:21px;color:#a9a9a9;transform:scaleX(0.9946);z-index:5">Material</div>
<div class="t" style="left:1697.00px;top:97.00px;font-size:19px;line-height:21px;color:#a9a9a9;transform:scaleX(0.9396);z-index:5">632.800</div>
<div class="t" style="left:1667.10px;top:136.00px;font-size:19px;line-height:21px;color:#8a8a8a;transform:scaleX(0.9032);z-index:5">NIR</div>
<div class="t" style="left:1667.13px;top:176.00px;font-size:19px;line-height:21px;color:#8a8a8a;transform:scaleX(0.8735);z-index:5">BK7</div>
<div class="t" style="left:28.14px;top:293.00px;font-size:18px;line-height:20px;color:#222222;font-weight:700;transform:scaleX(0.8648);z-index:5">DEC</div>
<div class="t" style="left:100.00px;top:293.00px;font-size:18px;line-height:20px;color:#777777;transform:scaleX(0.9309);z-index:5">SCI</div>
<div class="t" style="left:193.07px;top:290.00px;font-size:20px;line-height:22px;color:#222222;transform:scaleX(0.9286);z-index:5">Results</div>
<div class="t" style="left:104.09px;top:337.00px;font-size:16px;line-height:17px;color:#333333;font-weight:700;transform:scaleX(0.9138);z-index:5">Name</div>
<div class="t" style="left:300.00px;top:337.00px;font-size:16px;line-height:17px;color:#333333;font-weight:700;transform:scaleX(0.8829);z-index:5">Value</div>
<div class="t" style="left:451.00px;top:337.00px;font-size:16px;line-height:17px;color:#333333;font-weight:700;transform:scaleX(0.8478);z-index:5">Units</div>
<div class="t" style="left:59.09px;top:400.00px;font-size:20px;line-height:22px;color:#222222;transform:scaleX(0.9115);z-index:5">Laser</div>
<div class="t" style="left:44.04px;top:439.00px;font-size:19px;line-height:21px;color:#1f1f1f;transform:scaleX(0.9637);z-index:5">M² X</div>
<div class="t" style="left:93.07px;top:440.00px;font-size:18px;line-height:20px;color:#3a9be8;font-weight:700;transform:scaleX(0.9331);z-index:5">ISO</div>
<div class="t" style="left:248.07px;top:439.00px;font-size:19px;line-height:21px;color:#1f1f1f;transform:scaleX(0.9259);z-index:5">1.184</div>
<div class="t" style="left:44.04px;top:471.00px;font-size:19px;line-height:21px;color:#1f1f1f;transform:scaleX(0.9637);z-index:5">M² Y</div>
<div class="t" style="left:93.07px;top:472.00px;font-size:18px;line-height:20px;color:#3a9be8;font-weight:700;transform:scaleX(0.9331);z-index:5">ISO</div>
<div class="t" style="left:248.05px;top:471.00px;font-size:19px;line-height:21px;color:#1f1f1f;transform:scaleX(0.9461);z-index:5">1.203</div>
<div class="t" style="left:44.08px;top:503.00px;font-size:19px;line-height:21px;color:#1f1f1f;transform:scaleX(0.9172);z-index:5">Divergence X</div>
<div class="t" style="left:159.07px;top:504.00px;font-size:18px;line-height:20px;color:#3a9be8;font-weight:700;transform:scaleX(0.9331);z-index:5">ISO</div>
<div class="t" style="left:248.05px;top:503.00px;font-size:19px;line-height:21px;color:#1f1f1f;transform:scaleX(0.9461);z-index:5">1.025</div>
<div class="t" style="left:399.00px;top:503.00px;font-size:19px;line-height:21px;color:#1f1f1f;z-index:5">mrad</div>
<div class="t" style="left:44.08px;top:535.00px;font-size:19px;line-height:21px;color:#1f1f1f;transform:scaleX(0.9172);z-index:5">Divergence Y</div>
<div class="t" style="left:159.07px;top:536.00px;font-size:18px;line-height:20px;color:#3a9be8;font-weight:700;transform:scaleX(0.9331);z-index:5">ISO</div>
<div class="t" style="left:249.00px;top:535.00px;font-size:19px;line-height:21px;color:#1f1f1f;transform:scaleX(0.9259);z-index:5">0.953</div>
<div class="t" style="left:399.00px;top:535.00px;font-size:19px;line-height:21px;color:#1f1f1f;z-index:5">mrad</div>
<div class="t" style="left:45.00px;top:567.00px;font-size:19px;line-height:21px;color:#1f1f1f;transform:scaleX(0.9250);z-index:5">Waist Width X</div>
<div class="t" style="left:165.07px;top:568.00px;font-size:18px;line-height:20px;color:#3a9be8;font-weight:700;transform:scaleX(0.9331);z-index:5">ISO</div>
<div class="t" style="left:248.07px;top:567.00px;font-size:19px;line-height:21px;color:#1f1f1f;transform:scaleX(0.9326);z-index:5">1,515.824</div>
<div class="t" style="left:399.00px;top:567.00px;font-size:19px;line-height:21px;color:#1f1f1f;z-index:5">µm</div>
<div class="t" style="left:45.00px;top:599.00px;font-size:19px;line-height:21px;color:#1f1f1f;transform:scaleX(0.9250);z-index:5">Waist Width Y</div>
<div class="t" style="left:165.07px;top:600.00px;font-size:18px;line-height:20px;color:#3a9be8;font-weight:700;transform:scaleX(0.9331);z-index:5">ISO</div>
<div class="t" style="left:248.06px;top:599.00px;font-size:19px;line-height:21px;color:#1f1f1f;transform:scaleX(0.9438);z-index:5">1,655.709</div>
<div class="t" style="left:399.00px;top:599.00px;font-size:19px;line-height:21px;color:#1f1f1f;z-index:5">µm</div>
<div class="t" style="left:45.00px;top:631.00px;font-size:19px;line-height:21px;color:#1f1f1f;transform:scaleX(0.9354);z-index:5">Waist Location X</div>
<div class="t" style="left:188.07px;top:632.00px;font-size:18px;line-height:20px;color:#3a9be8;font-weight:700;transform:scaleX(0.9331);z-index:5">ISO</div>
<div class="t" style="left:249.00px;top:631.00px;font-size:19px;line-height:21px;color:#1f1f1f;transform:scaleX(0.9326);z-index:5">2,352.421</div>
<div class="t" style="left:399.00px;top:631.00px;font-size:19px;line-height:21px;color:#1f1f1f;z-index:5">mm</div>
<div class="t" style="left:45.00px;top:663.00px;font-size:19px;line-height:21px;color:#1f1f1f;transform:scaleX(0.9354);z-index:5">Waist Location Y</div>
<div class="t" style="left:188.07px;top:664.00px;font-size:18px;line-height:20px;color:#3a9be8;font-weight:700;transform:scaleX(0.9331);z-index:5">ISO</div>
<div class="t" style="left:249.00px;top:663.00px;font-size:19px;line-height:21px;color:#1f1f1f;transform:scaleX(0.9326);z-index:5">2,432.068</div>
<div class="t" style="left:399.00px;top:663.00px;font-size:19px;line-height:21px;color:#1f1f1f;z-index:5">mm</div>
<div class="t" style="left:45.00px;top:695.00px;font-size:19px;line-height:21px;color:#1f1f1f;transform:scaleX(0.9841);z-index:5">Astigmatism</div>
<div class="t" style="left:249.00px;top:695.00px;font-size:19px;line-height:21px;color:#1f1f1f;transform:scaleX(0.9259);z-index:5">0.050</div>
<div class="t" style="left:45.00px;top:727.00px;font-size:19px;line-height:21px;color:#1f1f1f;transform:scaleX(0.9738);z-index:5">Asymmetry</div>
<div class="t" style="left:248.05px;top:727.00px;font-size:19px;line-height:21px;color:#1f1f1f;transform:scaleX(0.9461);z-index:5">1.092</div>
<div class="t" style="left:60.00px;top:766.00px;font-size:20px;line-height:22px;color:#222222;transform:scaleX(0.9214);z-index:5">After Lens</div>
<div class="t" style="left:60.00px;top:812.00px;font-size:20px;line-height:22px;color:#222222;transform:scaleX(0.9783);z-index:5">Twist</div>
<div class="t" style="left:108.10px;top:852.00px;font-size:18px;line-height:20px;color:#3a9be8;font-weight:700;transform:scaleX(0.8998);z-index:5">ISO</div>
<div class="t" style="left:108.10px;top:884.00px;font-size:18px;line-height:20px;color:#3a9be8;font-weight:700;transform:scaleX(0.8998);z-index:5">ISO</div>
<div class="t" style="left:249.00px;top:851.00px;font-size:19px;line-height:21px;color:#1f1f1f;transform:scaleX(0.9153);z-index:5">0.975</div>
<div class="t" style="left:249.00px;top:883.00px;font-size:19px;line-height:21px;color:#1f1f1f;transform:scaleX(0.9237);z-index:5">-67.133</div>
<div class="t" style="left:400.00px;top:883.00px;font-size:19px;line-height:21px;color:#1f1f1f;transform:scaleX(0.9315);z-index:5">deg</div>
<div class="t" style="left:249.00px;top:915.00px;font-size:19px;line-height:21px;color:#fbe3e4;transform:scaleX(0.8882);z-index:5">91.864</div>
<div class="t" style="left:400.00px;top:915.00px;font-size:19px;line-height:21px;color:#1f1f1f;transform:scaleX(0.9315);z-index:5">deg</div>
<div class="t" style="left:44.05px;top:915.00px;font-size:19px;line-height:21px;color:#1f1f1f;transform:scaleX(0.9498);z-index:5">Beam Twist</div>
<div class="t" style="left:585.00px;top:291.00px;font-size:19px;line-height:21px;color:#1f1f1f;transform:scaleX(0.8911);z-index:5">OSI Rainbow</div>
<div class="t" style="left:548.00px;top:960.00px;font-size:19px;line-height:21px;color:#1f1f1f;transform:scaleX(0.9111);z-index:5">X: 3,725.38 µm</div>
<div class="t" style="left:676.00px;top:960.00px;font-size:19px;line-height:21px;color:#1f1f1f;transform:scaleX(1.0328);z-index:5">Y: 2,841.09 µm    I: 0.0123</div>
<div class="t" style="left:1351.00px;top:440.00px;font-size:19px;line-height:21px;color:#333333;transform:scaleX(0.9315);z-index:5">600</div>
<div class="t" style="left:1351.00px;top:550.00px;font-size:19px;line-height:21px;color:#333333;transform:scaleX(0.9315);z-index:5">500</div>
<div class="t" style="left:1351.00px;top:660.00px;font-size:19px;line-height:21px;color:#333333;transform:scaleX(0.9315);z-index:5">400</div>
<div class="t" style="left:1351.00px;top:771.00px;font-size:19px;line-height:21px;color:#333333;transform:scaleX(0.9315);z-index:5">300</div>
<div class="t" style="left:1494.50px;top:901.00px;font-size:19px;line-height:21px;color:#222222;transform:scaleX(0.9315);z-index:5">400</div>
<div class="t" style="left:1620.20px;top:901.00px;font-size:19px;line-height:21px;color:#222222;transform:scaleX(0.9315);z-index:5">450</div>
<div class="t" style="left:1744.70px;top:901.00px;font-size:19px;line-height:21px;color:#222222;transform:scaleX(0.9315);z-index:5">500</div>
<div class="t" style="left:1860.30px;top:901.00px;font-size:19px;line-height:21px;color:#222222;transform:scaleX(0.9315);z-index:5">550</div>
<div class="t" style="left:1545.00px;top:930.00px;font-size:26px;line-height:30px;color:#1f1f1f;transform:scaleX(0.9772);z-index:5">Z Locations (mm)</div>
<div class="t" style="left:1426.00px;top:416.00px;font-size:29px;line-height:32px;color:#0d55a0;transform:scaleX(0.8421);z-index:8">Y</div>
<div class="t" style="left:1454.70px;top:509.00px;font-size:29px;line-height:32px;color:#0d55a0;transform:scaleX(0.8421);z-index:8">Y</div>
<div class="t" style="left:1485.00px;top:593.00px;font-size:29px;line-height:32px;color:#0d55a0;transform:scaleX(0.8421);z-index:8">Y</div>
<div class="t" style="left:1514.00px;top:670.00px;font-size:29px;line-height:32px;color:#0d55a0;transform:scaleX(0.8421);z-index:8">Y</div>
<div class="t" style="left:1517.90px;top:669.00px;font-size:29px;line-height:32px;color:#0d55a0;transform:scaleX(0.8421);z-index:8">Y</div>
<div class="t" style="left:1544.10px;top:727.00px;font-size:29px;line-height:32px;color:#0d55a0;transform:scaleX(0.8421);z-index:8">Y</div>
<div class="t" style="left:1559.90px;top:757.00px;font-size:29px;line-height:32px;color:#0d55a0;transform:scaleX(0.8421);z-index:8">Y</div>
<div class="t" style="left:1574.80px;top:776.00px;font-size:29px;line-height:32px;color:#0d55a0;transform:scaleX(0.8421);z-index:8">Y</div>
<div class="t" style="left:1589.50px;top:795.00px;font-size:29px;line-height:32px;color:#0d55a0;transform:scaleX(0.8421);z-index:8">Y</div>
<div class="t" style="left:1604.50px;top:817.00px;font-size:29px;line-height:32px;color:#0d55a0;transform:scaleX(0.8421);z-index:8">Y</div>
<div class="t" style="left:1620.20px;top:825.00px;font-size:29px;line-height:32px;color:#0d55a0;transform:scaleX(0.8421);z-index:8">Y</div>
<div class="t" style="left:1634.60px;top:828.00px;font-size:29px;line-height:32px;color:#0d55a0;transform:scaleX(0.8421);z-index:8">Y</div>
<div class="t" style="left:1649.80px;top:826.00px;font-size:29px;line-height:32px;color:#0d55a0;transform:scaleX(0.8421);z-index:8">Y</div>
<div class="t" style="left:1664.80px;top:813.00px;font-size:29px;line-height:32px;color:#0d55a0;transform:scaleX(0.8421);z-index:8">Y</div>
<div class="t" style="left:1679.50px;top:789.00px;font-size:29px;line-height:32px;color:#0d55a0;transform:scaleX(0.8421);z-index:8">Y</div>
<div class="t" style="left:1694.70px;top:776.00px;font-size:29px;line-height:32px;color:#0d55a0;transform:scaleX(0.8421);z-index:8">Y</div>
<div class="t" style="left:1709.50px;top:752.00px;font-size:29px;line-height:32px;color:#0d55a0;transform:scaleX(0.8421);z-index:8">Y</div>
<div class="t" style="left:1724.20px;top:732.00px;font-size:29px;line-height:32px;color:#0d55a0;transform:scaleX(0.8421);z-index:8">Y</div>
<div class="t" style="left:1739.30px;top:699.00px;font-size:29px;line-height:32px;color:#0d55a0;transform:scaleX(0.8421);z-index:8">Y</div>
<div class="t" style="left:1754.90px;top:666.00px;font-size:29px;line-height:32px;color:#0d55a0;transform:scaleX(0.8421);z-index:8">Y</div>
<div class="t" style="left:1784.20px;top:600.00px;font-size:29px;line-height:32px;color:#0d55a0;transform:scaleX(0.8421);z-index:8">Y</div>
<div class="t" style="left:1814.00px;top:522.00px;font-size:29px;line-height:32px;color:#0d55a0;transform:scaleX(0.8421);z-index:8">Y</div>
<div class="t" style="left:1844.70px;top:460.00px;font-size:29px;line-height:32px;color:#0d55a0;transform:scaleX(0.8421);z-index:8">Y</div>
<div class="t" style="left:1426.00px;top:390.00px;font-size:29px;line-height:32px;color:#e65100;font-weight:700;transform:scaleX(0.8500);z-index:7">X</div>
<div class="t" style="left:1455.00px;top:477.00px;font-size:29px;line-height:32px;color:#e65100;font-weight:700;transform:scaleX(0.8500);z-index:7">X</div>
<div class="t" style="left:1484.50px;top:558.00px;font-size:29px;line-height:32px;color:#e65100;font-weight:700;transform:scaleX(0.8500);z-index:7">X</div>
<div class="t" style="left:1514.80px;top:626.00px;font-size:29px;line-height:32px;color:#e65100;font-weight:700;transform:scaleX(0.8500);z-index:7">X</div>
<div class="t" style="left:1518.20px;top:637.00px;font-size:29px;line-height:32px;color:#e65100;font-weight:700;transform:scaleX(0.8500);z-index:7">X</div>
<div class="t" style="left:1544.90px;top:693.00px;font-size:29px;line-height:32px;color:#e65100;font-weight:700;transform:scaleX(0.8500);z-index:7">X</div>
<div class="t" style="left:1560.20px;top:721.00px;font-size:29px;line-height:32px;color:#e65100;font-weight:700;transform:scaleX(0.8500);z-index:7">X</div>
<div class="t" style="left:1574.60px;top:745.00px;font-size:29px;line-height:32px;color:#e65100;font-weight:700;transform:scaleX(0.8500);z-index:7">X</div>
<div class="t" style="left:1589.50px;top:768.00px;font-size:29px;line-height:32px;color:#e65100;font-weight:700;transform:scaleX(0.8500);z-index:7">X</div>
<div class="t" style="left:1604.70px;top:790.00px;font-size:29px;line-height:32px;color:#e65100;font-weight:700;transform:scaleX(0.8500);z-index:7">X</div>
<div class="t" style="left:1619.70px;top:811.00px;font-size:29px;line-height:32px;color:#e65100;font-weight:700;transform:scaleX(0.8500);z-index:7">X</div>
<div class="t" style="left:1635.50px;top:829.00px;font-size:29px;line-height:32px;color:#e65100;font-weight:700;transform:scaleX(0.8500);z-index:7">X</div>
<div class="t" style="left:1649.90px;top:833.00px;font-size:29px;line-height:32px;color:#e65100;font-weight:700;transform:scaleX(0.8500);z-index:7">X</div>
<div class="t" style="left:1665.10px;top:833.00px;font-size:29px;line-height:32px;color:#e65100;font-weight:700;transform:scaleX(0.8500);z-index:7">X</div>
<div class="t" style="left:1679.80px;top:819.00px;font-size:29px;line-height:32px;color:#e65100;font-weight:700;transform:scaleX(0.8500);z-index:7">X</div>
<div class="t" style="left:1694.90px;top:806.00px;font-size:29px;line-height:32px;color:#e65100;font-weight:700;transform:scaleX(0.8500);z-index:7">X</div>
<div class="t" style="left:1709.10px;top:787.00px;font-size:29px;line-height:32px;color:#e65100;font-weight:700;transform:scaleX(0.8500);z-index:7">X</div>
<div class="t" style="left:1724.50px;top:762.00px;font-size:29px;line-height:32px;color:#e65100;font-weight:700;transform:scaleX(0.8500);z-index:7">X</div>
<div class="t" style="left:1739.70px;top:737.00px;font-size:29px;line-height:32px;color:#e65100;font-weight:700;transform:scaleX(0.8500);z-index:7">X</div>
<div class="t" style="left:1754.40px;top:707.00px;font-size:29px;line-height:32px;color:#e65100;font-weight:700;transform:scaleX(0.8500);z-index:7">X</div>
<div class="t" style="left:1785.00px;top:636.00px;font-size:29px;line-height:32px;color:#e65100;font-weight:700;transform:scaleX(0.8500);z-index:7">X</div>
<div class="t" style="left:1814.40px;top:569.00px;font-size:29px;line-height:32px;color:#e65100;font-weight:700;transform:scaleX(0.8500);z-index:7">X</div>
<div class="t" style="left:1844.20px;top:500.00px;font-size:29px;line-height:32px;color:#e65100;font-weight:700;transform:scaleX(0.8500);z-index:7">X</div>
</body></html>
